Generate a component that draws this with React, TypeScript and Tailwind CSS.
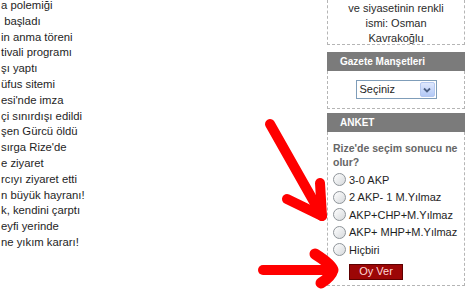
import React from "react";

const HEADLINES = [
  "a polemiği",
  " başladı",
  "in anma töreni",
  "tivali programı",
  "şı yaptı",
  "üfus sitemi",
  "esi'nde imza",
  "çi sınırdışı edildi",
  "şen Gürcü öldü",
  "sırga Rize'de",
  "e ziyaret",
  "rcıyı ziyaret etti",
  "n büyük hayranı!",
  "k, kendini çarptı",
  "eyfi yerinde",
  "ne yıkım kararı!",
];

const OPTIONS = [
  "3-0 AKP",
  "2 AKP- 1 M.Yılmaz",
  "AKP+CHP+M.Yılmaz",
  "AKP+ MHP+M.Yılmaz",
  "Hiçbiri",
];

function Radio() {
  return (
    <span className="mr-[3px] inline-block h-[13px] w-[13px] shrink-0 rounded-full border border-[#8e9499] bg-gradient-to-br from-white to-[#d6d9dc]" />
  );
}

function SideHeader({ title }: { title: string }) {
  return (
    <div className="flex h-[19px] items-center bg-[#7b7b7b] pl-[13px] text-[10px] font-bold text-white">
      {title}
    </div>
  );
}

export default function App() {
  return (
    <div
      className="relative flex h-[296px] w-[470px] overflow-hidden bg-white text-[11px] text-[#1e1e1e]"
      style={{ fontFamily: '"Liberation Sans", Arial, sans-serif' }}
    >
      {/* news list, cut off on the left */}
      <div className="-mt-[2px] w-[327px] shrink-0 whitespace-pre pl-[1px] text-[11.3px] leading-[15.8px]">
        {HEADLINES.map((h) => (
          <div key={h}>{h}</div>
        ))}
      </div>

      {/* sidebar */}
      <div className="flex w-[138px] shrink-0 flex-col">
        <div className="h-[45px] border-x border-b border-dashed border-[#b5b5b5] pt-[1px] text-center leading-[15px] text-[#2a2a2a]">
          <div>ve siyasetinin renkli</div>
          <div>ismi: Osman</div>
          <div>Kavrakoğlu</div>
        </div>

        <div className="mt-[7px]">
          <SideHeader title="Gazete Manşetleri" />
          <div className="flex h-[38px] justify-center border-x border-b border-dashed border-[#b5b5b5] pt-[9px]">
            <div className="flex h-[19px] w-[81px] items-center border border-[#7f9db9] bg-white">
              <span className="flex-1 pl-[3px]">Seçiniz</span>
              <span className="mr-[1px] flex h-[15px] w-[15px] items-center justify-center rounded-[2px] border border-[#b4c8f0] bg-gradient-to-b from-[#dfe8fd] to-[#b3c9f6]">
                <svg width="8" height="6" viewBox="0 0 8 6">
                  <path d="M1 1.5 L4 4.5 L7 1.5" fill="none" stroke="#4d6185" strokeWidth="1.8" />
                </svg>
              </span>
            </div>
          </div>
        </div>

        <div className="mt-[4px]">
          <SideHeader title="ANKET" />
          <div className="h-[154px] border-x border-b border-dashed border-[#b5b5b5] pl-[5px] pt-[9px]">
            <div className="text-[10.5px] font-bold leading-[14px] text-[#666]">
              Rize'de seçim sonucu ne
              <br />
              olur?
            </div>
            <div className="mt-[2px]">
              {OPTIONS.map((o) => (
                <div key={o} className="flex h-[17.5px] items-center">
                  <Radio />
                  <span>{o}</span>
                </div>
              ))}
            </div>
            <div className="mt-[5px] pl-[16px]">
              <div className="flex h-[16px] w-[54px] items-center justify-center border border-[#5e0000] bg-[#9c0606] text-[11px] text-[#ffd6d6]">
                Oy Ver
              </div>
            </div>
          </div>
        </div>
      </div>

      {/* red arrows drawn on the screenshot */}
      <svg
        className="pointer-events-none absolute left-0 top-0"
        width="470"
        height="296"
        viewBox="0 0 470 296"
      >
        <g fill="none" stroke="#ff0000" strokeWidth="10" strokeLinecap="round" strokeLinejoin="round">
          <path d="M270 124 L322 216" />
          <path d="M287 199 L322 216 L320 183" />
          <path d="M263 270 L333 270" />
          <path d="M315 254 Q331 264 333 270 Q331 277 321 283" strokeWidth="11" />
        </g>
      </svg>
    </div>
  );
}
